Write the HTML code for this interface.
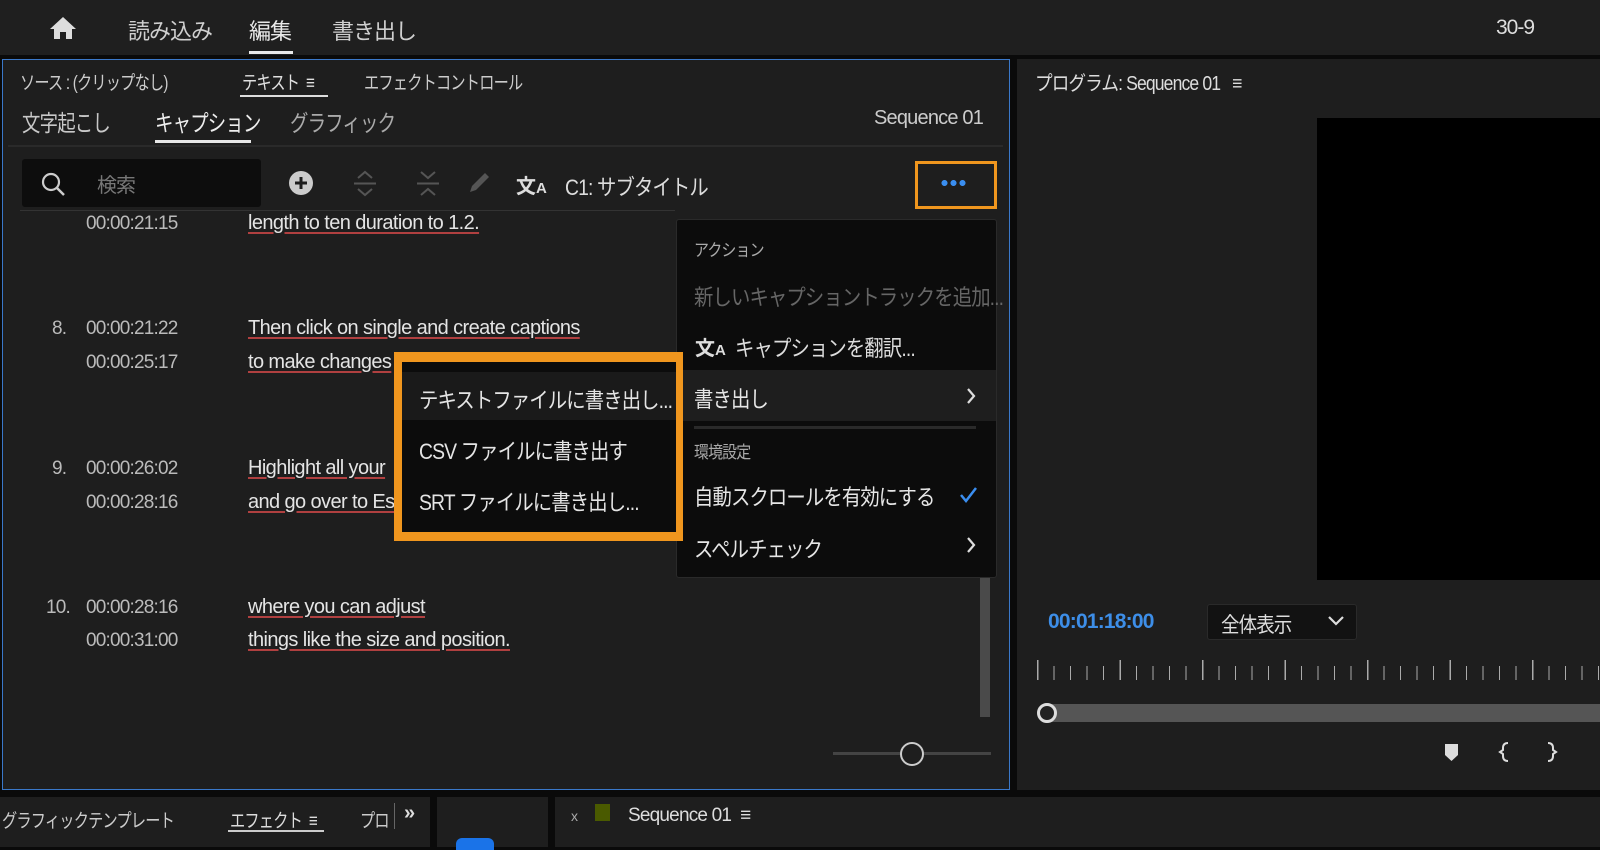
<!DOCTYPE html>
<html><head><meta charset="utf-8">
<style>
*{margin:0;padding:0;box-sizing:border-box}
body{width:1600px;height:847px;background:#0a0a0a;position:relative;overflow:hidden;font-family:"Liberation Sans","Noto Sans CJK JP",sans-serif;color:#d8d8d8}
.a{position:absolute;white-space:nowrap}
.t{font-size:20px;letter-spacing:-1px}
.n{transform:scaleX(.88);transform-origin:0 0}
.m{transform:scaleX(.8);transform-origin:0 0}
.u{text-decoration:underline;text-decoration-color:#b04040;text-underline-offset:3px}
.l{font-size:20px;letter-spacing:-0.6px;color:#e4e4e4}
.tc{font-size:19px;letter-spacing:-0.8px;color:#bbb}
</style></head><body>
<div class="a" style="left:0;top:0;width:1600px;height:55px;background:#1f1f1f"></div>
<svg class="a" style="left:48px;top:16px" width="30" height="24" viewBox="0 0 30 24"><path d="M15 1 L28 13 H24 V23 H18 V16 H12 V23 H6 V13 H2 Z" fill="#ddd"/></svg>
<div class="a t" style="left:128px;top:14px;font-size:22px;color:#cfcfcf">読み込み</div>
<div class="a t" style="left:249px;top:14px;font-size:22px;color:#e8e8e8">編集</div>
<div class="a" style="left:249px;top:51px;width:44px;height:3px;background:#e8e8e8"></div>
<div class="a t" style="left:332px;top:14px;font-size:22px;color:#cfcfcf">書き出し</div>
<div class="a t" style="left:1496px;top:16px;font-size:21px;color:#ddd">30-9</div>

<div class="a" style="left:2px;top:59px;width:1008px;height:731px;background:#1e1e1e;border:1.5px solid #3a78c9"></div>
<div class="a" style="left:1017px;top:59px;width:583px;height:731px;background:#1e1e1e"></div>

<div class="a t m" style="left:20px;top:68px;font-size:19px;color:#ccc">ソース : (クリップなし)</div>
<div class="a t m" style="left:242px;top:68px;font-size:19px;color:#e0e0e0">テキスト &nbsp;≡</div>
<div class="a" style="left:240px;top:95px;width:88px;height:2px;background:#ddd"></div>
<div class="a t m" style="left:364px;top:68px;font-size:19px;color:#ccc">エフェクトコントロール</div>
<div class="a t m" style="left:22px;top:104px;font-size:23px;color:#c8c8c8">文字起こし</div>
<div class="a t m" style="left:155px;top:104px;font-size:23px;color:#eee">キャプション</div>
<div class="a" style="left:155px;top:140px;width:96px;height:3px;background:#e8e8e8"></div>
<div class="a t m" style="left:290px;top:104px;font-size:23px;color:#aaa">グラフィック</div>
<div class="a" style="left:874px;top:107px;font-size:20px;letter-spacing:-0.8px;color:#ccc">Sequence 01</div>
<div class="a" style="left:8px;top:145px;width:995px;height:2px;background:#2a2a2a"></div>

<div class="a" style="left:22px;top:159px;width:239px;height:48px;background:#0d0d0d;border-radius:3px"></div>
<svg class="a" style="left:40px;top:171px" width="26" height="26"><circle cx="11" cy="11" r="8" stroke="#ccc" stroke-width="2.2" fill="none"/><path d="M17 17 L24 24" stroke="#ccc" stroke-width="2.5"/></svg>
<div class="a t" style="left:97px;top:169px;font-size:20px;color:#777">検索</div>
<svg class="a" style="left:288px;top:170px" width="28" height="28"><circle cx="13" cy="13" r="12" fill="#ccc"/><path d="M13 7V19M7 13H19" stroke="#1e1e1e" stroke-width="3"/></svg>
<svg class="a" style="left:350px;top:168px" width="30" height="30"><path d="M8 10 L15 4 L22 10 M8 21 L15 27 L22 21" stroke="#555" stroke-width="2" fill="none"/><path d="M4 15.5H26" stroke="#555" stroke-width="2"/></svg>
<svg class="a" style="left:413px;top:168px" width="30" height="30"><path d="M8 4 L15 10 L22 4 M8 27 L15 21 L22 27" stroke="#555" stroke-width="2" fill="none"/><path d="M4 15.5H26" stroke="#555" stroke-width="2"/></svg>
<svg class="a" style="left:466px;top:170px" width="26" height="26"><path d="M4 22 L6 16 L19 3 L23 7 L10 20 Z" fill="#555"/></svg>
<div class="a" style="left:516px;top:170px;font-size:20px;color:#ddd;font-weight:bold">文<span style="font-size:15px">A</span></div>
<div class="a t n" style="left:565px;top:170px;font-size:22px;color:#ddd">C1: サブタイトル</div>
<div class="a" style="left:915px;top:161px;width:82px;height:48px;border:3.5px solid #f0961e"></div>
<div class="a" style="left:940px;top:180px;width:26px;height:6px;background:radial-gradient(circle,#3a8ef0 2.8px,transparent 3.2px) 0 0/9px 6px"></div>

<div class="a" style="left:20px;top:210px;width:655px;height:1px;background:#333"></div>
<div class="a tc" style="left:86px;top:213px">00:00:21:15</div>
<div class="a u l" style="left:248px;top:212px">length to ten duration to 1.2.</div>

<div class="a tc" style="left:52px;top:318px">8.</div>
<div class="a tc" style="left:86px;top:318px">00:00:21:22</div>
<div class="a tc" style="left:86px;top:352px">00:00:25:17</div>
<div class="a u l" style="left:248px;top:317px">Then click on single and create captions</div>
<div class="a u l" style="left:248px;top:351px">to make changes</div>
<div class="a tc" style="left:52px;top:458px">9.</div>
<div class="a tc" style="left:86px;top:458px">00:00:26:02</div>
<div class="a tc" style="left:86px;top:492px">00:00:28:16</div>
<div class="a u l" style="left:248px;top:457px">Highlight all your</div>
<div class="a u l" style="left:248px;top:491px">and go over to Es</div>
<div class="a tc" style="left:46px;top:597px">10.</div>
<div class="a tc" style="left:86px;top:597px">00:00:28:16</div>
<div class="a tc" style="left:86px;top:630px">00:00:31:00</div>
<div class="a u l" style="left:248px;top:596px">where you can adjust</div>
<div class="a u l" style="left:248px;top:629px">things like the size and position.</div>

<div class="a" style="left:980px;top:570px;width:10px;height:147px;background:#4a4a4a"></div>
<div class="a" style="left:833px;top:752px;width:158px;height:3px;background:#444"></div>
<div class="a" style="left:900px;top:742px;width:24px;height:24px;border-radius:50%;border:2.5px solid #ccc;background:#1e1e1e"></div>

<!-- main menu -->
<div class="a" style="left:676px;top:219px;width:321px;height:359px;background:#0c0c0c;border:1px solid #2a2a2a;border-radius:3px"></div>
<div class="a t n" style="left:694px;top:236px;font-size:17px;color:#aaa">アクション</div>
<div class="a t n" style="left:694px;top:280px;font-size:22px;color:#666">新しいキャプショントラックを追加...</div>
<div class="a" style="left:695px;top:332px;font-size:20px;color:#ddd;font-weight:bold">文<span style="font-size:15px">A</span></div>
<div class="a t n" style="left:735px;top:331px;font-size:22px;color:#ddd">キャプションを翻訳...</div>
<div class="a" style="left:677px;top:370px;width:319px;height:51px;background:#1e1e1e"></div>
<div class="a t n" style="left:694px;top:382px;font-size:22px;color:#e6e6e6">書き出し</div>
<svg class="a" style="left:964px;top:386px" width="14" height="20"><path d="M4 3 L10 10 L4 17" stroke="#ddd" stroke-width="2.2" fill="none"/></svg>
<div class="a" style="left:694px;top:426px;width:282px;height:3px;background:#2a2a2a"></div>
<div class="a t n" style="left:694px;top:438px;font-size:17px;color:#aaa">環境設定</div>
<div class="a t n" style="left:694px;top:480px;font-size:22px;color:#e6e6e6">自動スクロールを有効にする</div>
<svg class="a" style="left:958px;top:484px" width="22" height="22"><path d="M3 11 L8 17 L18 4" stroke="#3a8ef0" stroke-width="2.5" fill="none"/></svg>
<div class="a t n" style="left:694px;top:532px;font-size:22px;color:#e6e6e6">スペルチェック</div>
<svg class="a" style="left:964px;top:535px" width="14" height="20"><path d="M4 3 L10 10 L4 17" stroke="#ddd" stroke-width="2.2" fill="none"/></svg>

<!-- submenu -->
<div class="a" style="left:394px;top:352px;width:289px;height:189px;background:#f0961e"></div>
<div class="a" style="left:402px;top:362px;width:274px;height:170px;background:#0c0c0c"></div>
<div class="a" style="left:402px;top:372px;width:274px;height:48px;background:#1a1a1a"></div>
<div class="a t n" style="left:419px;top:383px;font-size:22px;color:#e4e4e4">テキストファイルに書き出し...</div>
<div class="a t n" style="left:419px;top:434px;font-size:22px;color:#e4e4e4">CSV ファイルに書き出す</div>
<div class="a t n" style="left:419px;top:485px;font-size:22px;color:#e4e4e4">SRT ファイルに書き出し...</div>

<!-- right -->
<div class="a t n" style="left:1035px;top:67px;font-size:20px;color:#ddd">プログラム: Sequence 01 &nbsp;&nbsp;≡</div>
<div class="a" style="left:1317px;top:118px;width:283px;height:462px;background:#000"></div>
<div class="a" style="left:1048px;top:610px;font-size:21px;color:#3d8ee8;font-weight:bold;letter-spacing:-0.8px">00:01:18:00</div>
<div class="a" style="left:1207px;top:604px;width:150px;height:36px;background:#121212;border:1px solid #2a2a2a;border-radius:3px"></div>
<div class="a t n" style="left:1221px;top:609px;font-size:21px;color:#ddd">全体表示</div>
<svg class="a" style="left:1327px;top:614px" width="18" height="14"><path d="M2 3 L9 10 L16 3" stroke="#ddd" stroke-width="2.2" fill="none"/></svg>
<div class="a" style="left:1037px;top:666px;width:563px;height:14px;background:repeating-linear-gradient(90deg,#aaa 0 1px,transparent 1px 16.5px)"></div>
<div class="a" style="left:1037px;top:660px;width:563px;height:20px;background:repeating-linear-gradient(90deg,#aaa 0 1.5px,transparent 1.5px 82.5px)"></div>
<div class="a" style="left:1040px;top:704px;width:560px;height:18px;background:#555;border-radius:9px 0 0 9px"></div>
<div class="a" style="left:1037px;top:703px;width:20px;height:20px;border-radius:50%;border:3px solid #ddd;background:#222"></div>
<svg class="a" style="left:1442px;top:741px" width="120" height="22"><path d="M3 3H16V14L9.5 20L3 14Z" fill="#ddd"/><path d="M66 2 Q61 2 61 7 V9 L58 11 L61 13 V15 Q61 20 66 20" stroke="#ddd" stroke-width="2" fill="none"/><path d="M106 2 Q111 2 111 7 V9 L114 11 L111 13 V15 Q111 20 106 20" stroke="#ddd" stroke-width="2" fill="none"/></svg>

<!-- bottom -->
<div class="a" style="left:0;top:797px;width:430px;height:50px;background:#1e1e1e"></div>
<div class="a" style="left:437px;top:797px;width:111px;height:50px;background:#1e1e1e"></div>
<div class="a" style="left:555px;top:797px;width:1045px;height:50px;background:#1e1e1e"></div>
<div class="a t m" style="left:2px;top:806px;font-size:19px;color:#ccc">グラフィックテンプレート</div>
<div class="a t m" style="left:230px;top:806px;font-size:19px;color:#ddd">エフェクト &nbsp;≡</div>
<div class="a" style="left:228px;top:830px;width:96px;height:2px;background:#ccc"></div>
<div class="a t m" style="left:360px;top:806px;font-size:19px;color:#ccc">プロ</div>
<div class="a" style="left:394px;top:803px;width:1px;height:26px;background:#666"></div>
<div class="a" style="left:404px;top:802px;font-size:20px;color:#ddd;font-weight:bold">»</div>
<div class="a" style="left:456px;top:838px;width:38px;height:12px;background:#1a73e8;border-radius:6px 6px 0 0"></div>
<div class="a" style="left:571px;top:808px;font-size:14px;color:#aaa">x</div>
<div class="a" style="left:595px;top:804px;width:15px;height:17px;background:#4a5a00"></div>
<div class="a" style="left:628px;top:805px;font-size:19px;letter-spacing:-0.8px;color:#ddd">Sequence 01 &nbsp;≡</div>
</body></html>
